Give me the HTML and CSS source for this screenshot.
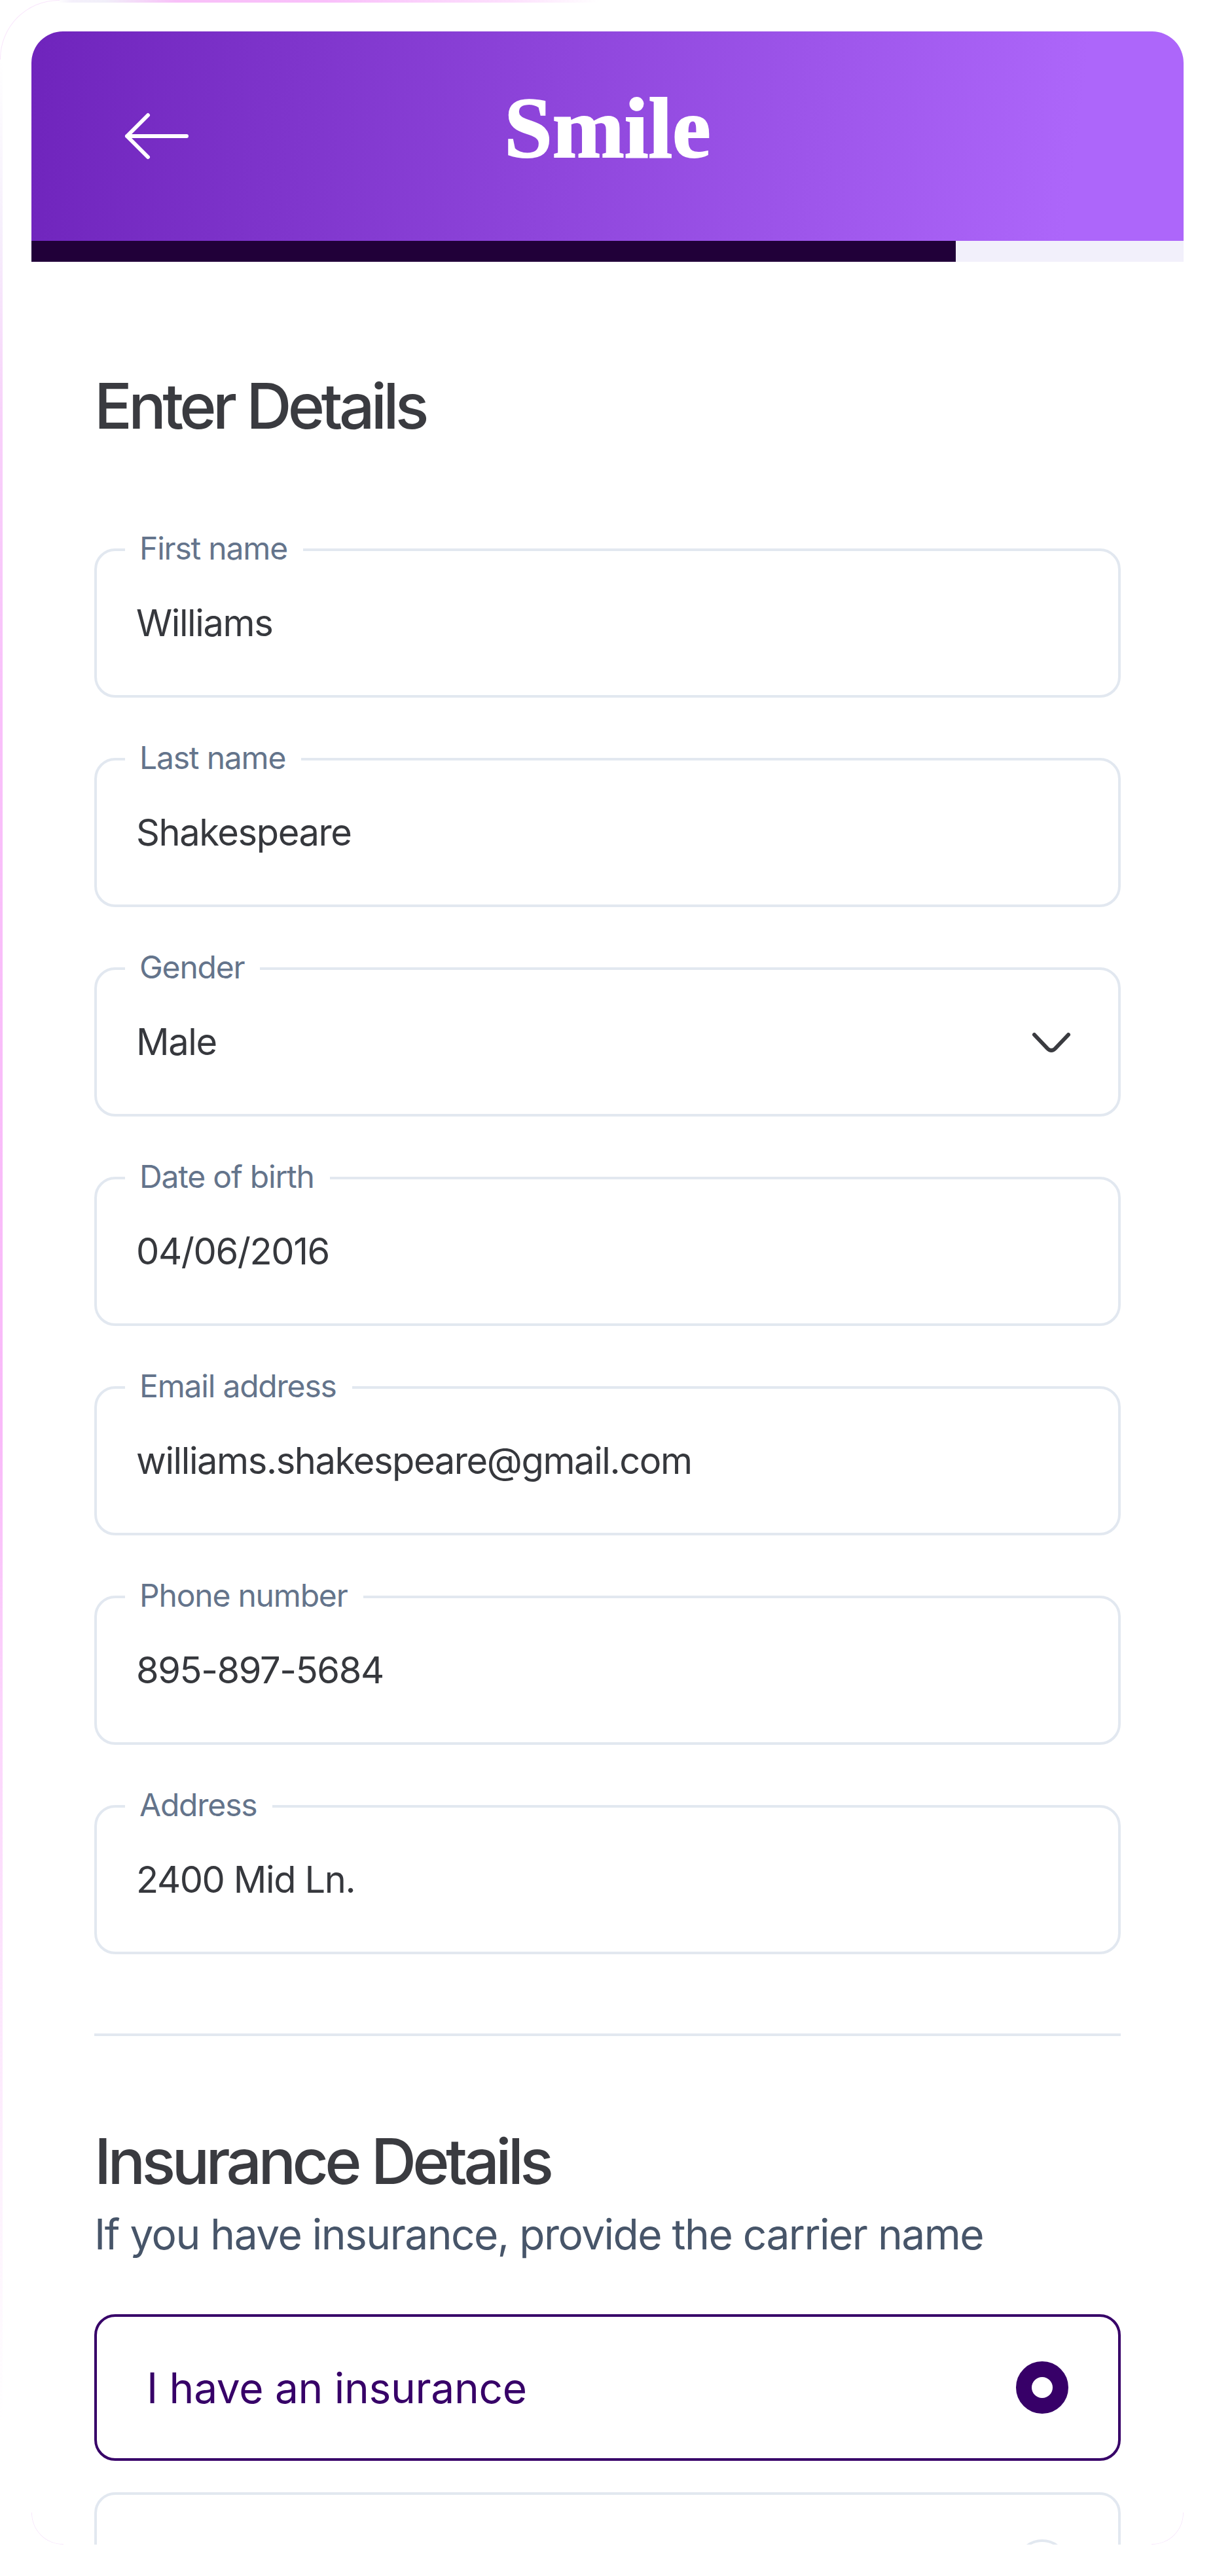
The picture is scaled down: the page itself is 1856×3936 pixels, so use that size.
FILE: index.html
```html
<!DOCTYPE html>
<html lang="en">
<head>
    <meta charset="UTF-8">
    <meta name="viewport" content="width=device-width, initial-scale=1.0">
    <title>Smile - Enter Details</title>
    <link rel="stylesheet" href="styles.css">
</head>
<body>
    <div class="frame">
        <div class="sheet">
            <div class="panel">
                <header class="top-bar">
                    <div class="back-button">
                        <svg width="100" height="76" viewBox="0 0 100 76" fill="none" stroke="#fff" stroke-width="6" stroke-linecap="round" stroke-linejoin="round">
                            <path d="M95 38H4M36 6L4 38L36 70"></path>
                        </svg>
                    </div>
                    <div class="logo">Smile</div>
                </header>
                <div class="progress">
                    <div class="progress-fill" style="width: 80.2%"></div>
                </div>

                <form class="content">
                    <h1 class="section-title">Enter Details</h1>

                    <div class="fields">
                        <fieldset class="field">
                            <legend>First name</legend>
                            <div class="field-value">Williams</div>
                        </fieldset>
                        <fieldset class="field">
                            <legend>Last name</legend>
                            <div class="field-value">Shakespeare</div>
                        </fieldset>
                        <fieldset class="field">
                            <legend>Gender</legend>
                            <div class="field-value">
                                <span>Male</span>
                                <svg class="chevron" width="60" height="34" viewBox="0 0 60 34" fill="none" stroke="#3a3b40" stroke-width="6" stroke-linecap="round" stroke-linejoin="round">
                                    <path d="M4 6L24 27Q30 33 36 27L56 6"></path>
                                </svg>
                            </div>
                        </fieldset>
                        <fieldset class="field">
                            <legend>Date of birth</legend>
                            <div class="field-value">04/06/2016</div>
                        </fieldset>
                        <fieldset class="field">
                            <legend>Email address</legend>
                            <div class="field-value">williams.shakespeare@gmail.com</div>
                        </fieldset>
                        <fieldset class="field">
                            <legend>Phone number</legend>
                            <div class="field-value">895-897-5684</div>
                        </fieldset>
                        <fieldset class="field">
                            <legend>Address</legend>
                            <div class="field-value">2400 Mid Ln.</div>
                        </fieldset>
                    </div>

                    <hr class="divider">

                    <h2 class="section-title">Insurance Details</h2>
                    <p class="section-note">If you have insurance, provide the carrier name</p>

                    <div class="options">
                        <div class="option selected">
                            <span class="option-label">I have an insurance</span>
                            <span class="radio"></span>
                        </div>
                        <div class="option">
                            <span class="radio"></span>
                        </div>
                    </div>
                </form>
            </div>
        </div>
    </div>
</body>
</html>
```

FILE: styles.css
```css
* {
    box-sizing: border-box;
}

body {
    margin: 0;
    background-color: #fff;
    font-family: Inter, "Liberation Sans", sans-serif;
}

/* thin pink glow that peeks out along the top and left edge */
.frame {
    position: relative;
    width: 1856px;
    height: 3936px;
    padding: 4px 0 0 4px;
    overflow: hidden;
    background-color: #fff;
    background-image:
        linear-gradient(to right, #fff 88px, #f4f0fb 110px, #f1eff9 160px, #f8c0f8 270px, #f9c0fa 500px, #fde0fd 780px, #fff 915px),
        linear-gradient(to bottom, #fff 90px, #f6effc 350px, #f8d0fa 650px, #f9c0fa 1100px, #f9baf9 2200px, #fcd4fc 2600px, #fdf0fd 3300px, #fff 3700px);
    background-size: 100% 4px, 4px 100%;
    background-repeat: no-repeat;
}

.frame::before {
    content: "";
    position: absolute;
    top: 0;
    left: 0;
    width: 90px;
    height: 90px;
    border-top: 1px solid #f9e6fc;
    border-left: 1px solid #f9e6fc;
    border-top-left-radius: 90px;
}

.sheet {
    height: 100%;
    padding: 44px 48px 44px 44px;
    background-color: #fff;
}

.panel {
    position: relative;
    height: 3840px;
    overflow: hidden;
    border-radius: 48px;
}

.panel::before,
.panel::after {
    content: "";
    position: absolute;
    bottom: 0;
    width: 48px;
    height: 48px;
    border-bottom: 1px solid #f6e6fb;
}

.panel::before {
    left: 0;
    border-left: 1px solid #f6e6fb;
    border-bottom-left-radius: 48px;
}

.panel::after {
    right: 0;
    border-right: 1px solid #f6e6fb;
    border-bottom-right-radius: 48px;
}

.top-bar {
    display: grid;
    grid-template-columns: 1fr auto 1fr;
    align-items: center;
    height: 320px;
    background: linear-gradient(97deg, #6f24bc 0%, #ad66fa 90%);
}

.back-button {
    display: flex;
    align-items: center;
    height: 76px;
    margin-left: 142px;
}

.logo {
    margin-bottom: 24px;
    color: #fff;
    font-family: "Liberation Serif", serif;
    font-size: 132px;
    font-weight: bold;
    line-height: 130px;
    -webkit-text-stroke: 2px #fff;
}

.progress {
    height: 32px;
    background-color: #f2f0fb;
}

.progress-fill {
    height: 100%;
    background-color: #210039;
}

.content {
    padding: 156px 96px 0;
}

.section-title {
    margin: 0;
    color: #3a3b40;
    font-size: 96px;
    font-weight: 500;
    line-height: 128px;
    letter-spacing: -5.7px;
}

.fields {
    display: flex;
    flex-direction: column;
    gap: 62px;
    margin-top: 124px;
}

.field {
    min-width: 0;
    margin: 0;
    padding: 40px 60px 70px;
    border: 4px solid #e2e8f0;
    border-radius: 32px;
}

.field legend {
    margin-left: -17px;
    padding: 0 24px 4px 22px;
    color: #64748b;
    font-size: 48px;
    line-height: 60px;
    letter-spacing: -0.025em;
}

.field-value {
    display: flex;
    justify-content: space-between;
    align-items: center;
    height: 80px;
    color: #36383d;
    font-size: 56px;
    line-height: 80px;
    letter-spacing: -0.025em;
}

.chevron {
    margin-right: 12px;
}

.divider {
    height: 4px;
    margin: 121px 0 0;
    border: none;
    background-color: #e2e8f0;
}

.divider + .section-title {
    margin-top: 127px;
}

.section-note {
    margin: 4px 0 0;
    color: #475569;
    font-size: 64px;
    line-height: 88px;
    letter-spacing: -1.5px;
}

.options {
    display: flex;
    flex-direction: column;
    gap: 48px;
    margin-top: 78px;
}

.option {
    display: flex;
    justify-content: space-between;
    align-items: center;
    height: 224px;
    padding: 0 76px;
    border: 4px solid #e2e8f0;
    border-radius: 32px;
}

.option.selected {
    border-color: #370068;
}

.option:not(.selected) {
    justify-content: flex-end;
}

.option-label {
    color: #370068;
    font-size: 64px;
    letter-spacing: -0.3px;
}

.radio {
    width: 80px;
    height: 80px;
    border: 4px solid #e2e8f0;
    border-radius: 50%;
}

.option.selected .radio {
    border: 24px solid #370068;
}
```
